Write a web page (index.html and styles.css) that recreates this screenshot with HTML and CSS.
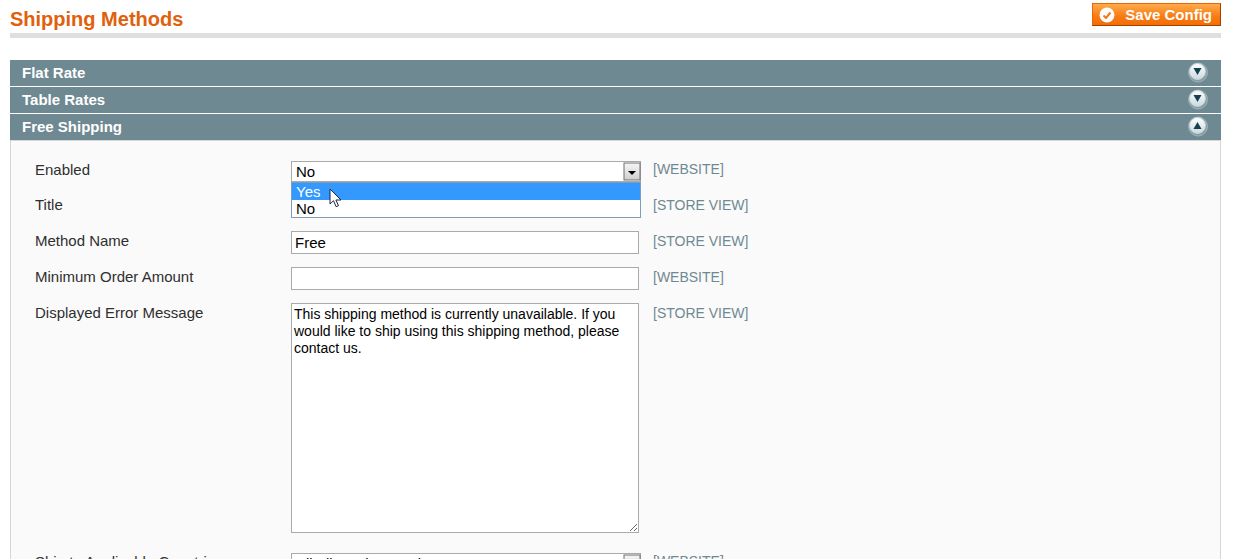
FILE: index.html
```
<!DOCTYPE html>
<html lang="en">
<head>
    <meta charset="UTF-8">
    <meta name="viewport" content="width=device-width, initial-scale=1.0">
    <title>Shipping Methods</title>
    <link rel="stylesheet" href="styles.css">
</head>
<body>

<svg class="sprite" aria-hidden="true">
    <defs>
        <linearGradient id="knob-fill" x1="0" y1="0" x2="0" y2="1">
            <stop offset="0" stop-color="#ffffff"/>
            <stop offset="1" stop-color="#c9dadf"/>
        </linearGradient>
        <linearGradient id="drop-fill" x1="0" y1="0" x2="0" y2="1">
            <stop offset="0" stop-color="#f6f6f6"/>
            <stop offset="1" stop-color="#cfcfcf"/>
        </linearGradient>
    </defs>
    <symbol id="knob" viewBox="0 0 22 22">
        <circle cx="11" cy="11.500" r="9.500" fill="#849ca4" stroke="#9fb3b9"/>
        <circle cx="10.500" cy="10.500" r="8" fill="url(#knob-fill)" stroke="#c3d2d6"/>
    </symbol>
    <symbol id="drop" viewBox="0 0 18 19">
        <rect x="1" y="1" width="16" height="17" fill="url(#drop-fill)" stroke="#707070"/>
        <path d="M5 9h8l-4 4z" fill="#000"/>
    </symbol>
</svg>

<header class="content-header">
    <h1>Shipping Methods</h1>
    <button type="button" class="save">
        <svg width="16" height="16" viewBox="0 0 16 16" aria-hidden="true">
            <circle cx="8" cy="8" r="7.500" fill="#fff"/>
            <path d="M4.500 8.500l2.500 2.500 4.500-5.500" fill="none" stroke="#ee7a1c" stroke-width="2"/>
        </svg>
        Save Config
    </button>
</header>

<main>
    <a href="#flatrate" class="section-head">Flat Rate
        <svg width="22" height="22" viewBox="0 0 22 22" aria-hidden="true"><use href="#knob"/><path d="M6.500 7h8l-4 7z" fill="#17404f"/></svg>
    </a>
    <a href="#tablerate" class="section-head">Table Rates
        <svg width="22" height="22" viewBox="0 0 22 22" aria-hidden="true"><use href="#knob"/><path d="M6.500 7h8l-4 7z" fill="#17404f"/></svg>
    </a>
    <a href="#freeshipping" class="section-head">Free Shipping
        <svg width="22" height="22" viewBox="0 0 22 22" aria-hidden="true"><use href="#knob"/><path d="M6.500 14h8l-4-7z" fill="#17404f"/></svg>
    </a>

    <form class="fields" id="freeshipping">
        <div class="row select-row">
            <label for="active">Enabled</label>
            <div class="select">
                <select id="active">
                    <option>Yes</option>
                    <option selected>No</option>
                </select>
                <svg class="drop" width="18" height="19" aria-hidden="true"><use href="#drop"/></svg>
                <ul class="options">
                    <li class="active">Yes</li>
                    <li>No</li>
                </ul>
                <svg class="cursor" width="13" height="20" viewBox="0 0 13 20" aria-hidden="true">
                    <path d="M1 1v15l3.500-3.300 2.600 6 2.400-1-2.600-5.700H12z" fill="#fff" stroke="#1c2440"/>
                </svg>
            </div>
            <span class="scope">[WEBSITE]</span>
        </div>
        <div class="row">
            <label for="title">Title</label>
            <input type="text" id="title">
            <span class="scope">[STORE VIEW]</span>
        </div>
        <div class="row">
            <label for="name">Method Name</label>
            <input type="text" id="name" value="Free">
            <span class="scope">[STORE VIEW]</span>
        </div>
        <div class="row">
            <label for="minimum">Minimum Order Amount</label>
            <input type="text" id="minimum">
            <span class="scope">[WEBSITE]</span>
        </div>
        <div class="row">
            <label for="error">Displayed Error Message</label>
            <textarea id="error">This shipping method is currently unavailable. If you would like to ship using this shipping method, please contact us.</textarea>
            <span class="scope">[STORE VIEW]</span>
        </div>
        <div class="row select-row countries">
            <label for="countries">Ship to Applicable Countries</label>
            <div class="select">
                <select id="countries">
                    <option>All Allowed Countries</option>
                </select>
                <svg class="drop" width="18" height="19" aria-hidden="true"><use href="#drop"/></svg>
            </div>
            <span class="scope">[WEBSITE]</span>
        </div>
    </form>
</main>

</body>
</html>
```
FILE: styles.css
```
* {
    box-sizing: border-box;
}

html, body {
    height: 100%;
    overflow: hidden;
}

body {
    margin: 0;
    padding: 3px 22px 0 10px;
    background: #fff;
    color: #2f2f2f;
    font-family: "Liberation Sans", Arial, sans-serif;
    font-size: 15px;
}

.sprite {
    position: absolute;
    width: 0;
    height: 0;
}

.content-header {
    display: flex;
    justify-content: space-between;
    align-items: flex-start;
    height: 35px;
    margin-bottom: 22px;
    border-bottom: 5px solid #dfdfdf;
}

.content-header h1 {
    margin: 5px 0 0;
    font-size: 20px;
    line-height: 22px;
    color: #e1600c;
}

.save {
    display: flex;
    align-items: center;
    gap: 10px;
    height: 23px;
    padding: 0 8px 0 6px;
    border: 1px solid;
    border-color: #ed6502 #a04300 #a04300 #ed6502;
    background: linear-gradient(#ffab4d, #f77b12 60%, #f36e06);
    color: #fff;
    font: bold 15px "Liberation Sans", Arial, sans-serif;
}

.section-head {
    display: flex;
    justify-content: space-between;
    height: 26px;
    margin-bottom: 1px;
    padding: 1px 12px;
    background: #6f8992;
    color: #fff;
    font-weight: bold;
    line-height: 23px;
    text-decoration: none;
}

.fields {
    margin-top: -1px;
    padding: 20px 24px;
    border: 1px solid #d6d6d6;
    background: #fafafa;
}

.row {
    display: grid;
    grid-template-columns: 256px 350px 1fr;
    align-items: start;
    margin-bottom: 13px;
    line-height: 20px;
}

.select-row {
    line-height: 17px;
}

.countries {
    margin-top: 20px;
}

.scope {
    padding-left: 12px;
    font-size: 14px;
    color: #6f8992;
}

.select {
    position: relative;
}

select,
input,
textarea {
    display: block;
    margin: 0;
    border: 1px solid #aaa;
    border-radius: 0;
    outline: none;
    background: #fff;
    color: #000;
    font: 15px "Liberation Sans", Arial, sans-serif;
}

select {
    width: 100%;
    height: 21px;
    padding: 0 4px 1px;
    appearance: none;
}

input {
    width: 348px;
    height: 23px;
    padding: 0 3px;
}

textarea {
    width: 348px;
    height: 230px;
    padding: 2px;
    font-size: 14px;
    line-height: 17px;
    resize: both;
}

.drop {
    position: absolute;
    top: 1px;
    right: 0;
}

/* open list, lies over the Title field */
.options {
    position: absolute;
    top: 21px;
    left: 0;
    z-index: 2;
    width: 100%;
    margin: 0;
    padding: 0;
    border: 1px solid #7f9db9;
    background: #fff;
    color: #000;
    line-height: 17px;
    list-style: none;
}

.options li {
    padding: 0 4px;
}

.options .active {
    background: #3399ff;
    color: #fff;
}

.cursor {
    position: absolute;
    top: 27px;
    left: 38px;
    z-index: 3;
}
```
